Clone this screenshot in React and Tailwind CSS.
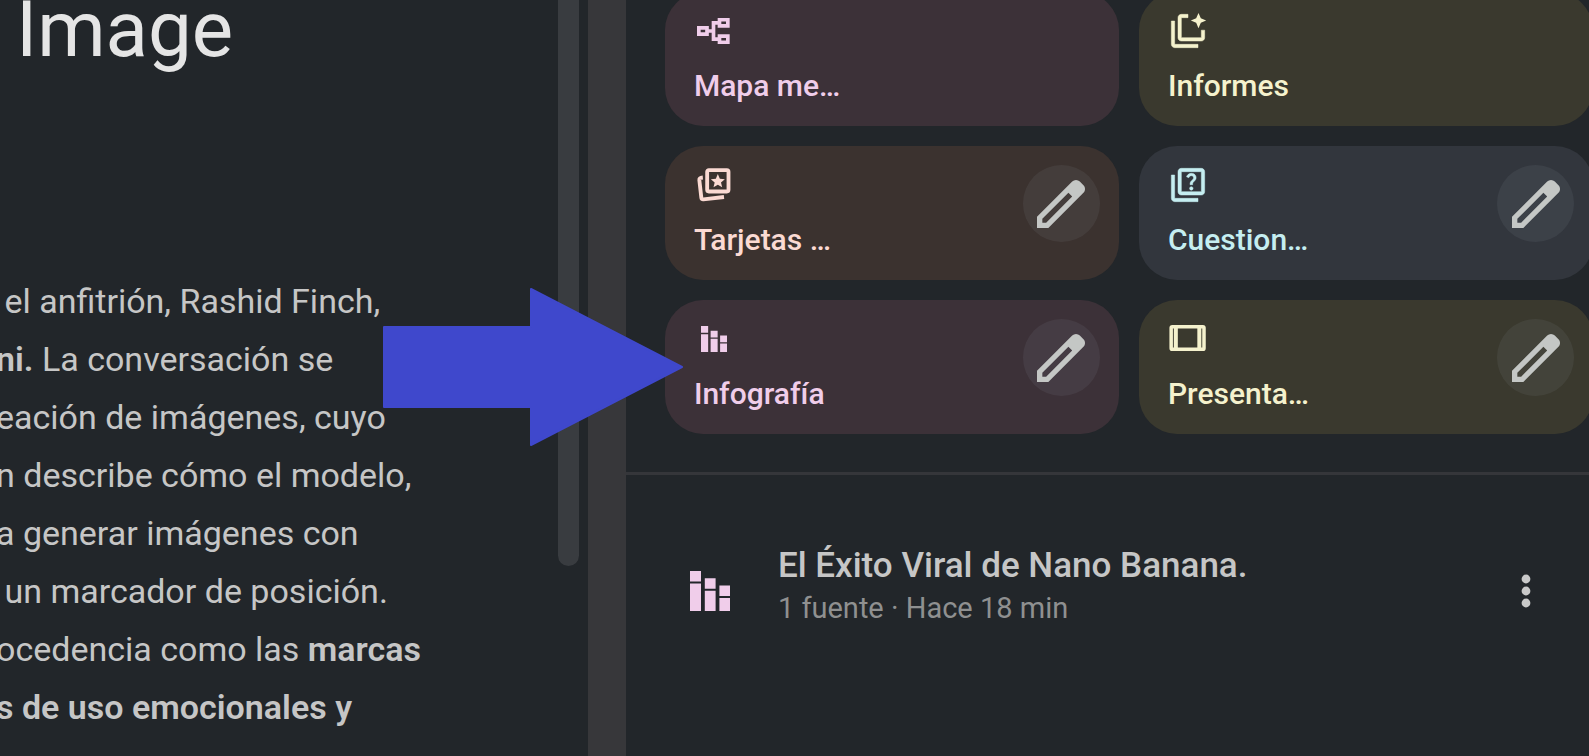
const ICON = 'size-10 shrink-0'

function MindMapIcon() {
  return (
    <svg viewBox="0 0 24 24" className={ICON} fill="none" stroke="currentColor" strokeWidth="2.200" aria-hidden="true">
      <path d="M2.900 10.100h4.900v3.800H2.900zM15.300 5.250h5v3.700h-5zM15.300 15.050h5v3.700h-5zM8 12h4M15.500 7.100H11.700v9.800h3.800" />
    </svg>
  )
}

function ReportIcon() {
  return (
    <svg viewBox="0 0 24 24" className={ICON} fill="currentColor" stroke="currentColor" strokeWidth="0.300" aria-hidden="true">
      <path d="M4 6H2v14c0 1.100.9 2 2 2h14v-2H4V6z" />
      <path d="M12 2H8c-1.100 0-2 .9-2 2v12c0 1.100.9 2 2 2h12c1.100 0 2-.9 2-2v-4.500h-2V16H8V4h4z" />
      <path stroke="none" d="M18.300 1.200l1.400 3.100 3.200 1.400-3.200 1.400-1.400 3.200-1.400-3.200-3.200-1.400 3.200-1.400z" />
    </svg>
  )
}

function FlashcardsIcon() {
  return (
    <svg viewBox="0 0 24 24" className={ICON} fill="none" stroke="currentColor" strokeWidth="2.300" aria-hidden="true">
      <rect x="7.900" y="3.100" width="12.800" height="12.800" rx="1" />
      <path d="M5.300 7.500Q3.100 7.700 3.200 9l1.200 10.600q.1 1.100 1.200 1L18 19.200" />
      <path fill="currentColor" stroke="none" d="M14.300 5.400l1.200 2.800 3 .3-2.300 2 .7 2.900-2.600-1.500-2.600 1.500.7-2.900-2.300-2 3-.3z" />
    </svg>
  )
}

function QuizIcon() {
  return (
    <svg viewBox="0 0 24 24" className={ICON} fill="currentColor" stroke="currentColor" strokeWidth="0.300" aria-hidden="true">
      <path d="M4 6H2v14c0 1.100.9 2 2 2h14v-2H4V6zm16-4H8c-1.100 0-2 .9-2 2v12c0 1.100.9 2 2 2h12c1.100 0 2-.9 2-2V4c0-1.100-.9-2-2-2zm0 14H8V4h12v12z" />
      <path d="M13.510 10.160c.41-.73 1.180-1.160 1.630-1.800.48-.68.21-1.940-1.140-1.940-.88 0-1.320.67-1.500 1.230l-1.370-.57C11.510 5.960 12.520 5 13.990 5c1.230 0 2.080.56 2.510 1.260.37.6.58 1.730.01 2.570-.63.93-1.230 1.210-1.560 1.810-.13.24-.18.4-.18 1.180h-1.520c.01-.41-.06-1.080.26-1.660zM12.950 14.050c0-.59.47-1.040 1.050-1.040.59 0 1.040.45 1.040 1.040 0 .58-.44 1.050-1.040 1.050-.58 0-1.050-.47-1.050-1.050z" />
    </svg>
  )
}

function BarsIcon({ className }) {
  return (
    <svg viewBox="0 0 40 40" className={className} fill="currentColor" aria-hidden="true">
      <path d="M0 0h11v10.500H0zM0 12.500h11V40H0zM14.800 7.200h10.800v10.500H14.800zM14.800 19.700h10.800V40H14.800zM29.400 14.500H40V25H29.400zM29.400 27H40v13H29.400z" />
    </svg>
  )
}

function SlidesIcon() {
  return (
    <svg viewBox="0 0 24 24" className={ICON} fill="none" stroke="currentColor" strokeWidth="2.100" aria-hidden="true">
      <rect x="1.900" y="4.600" width="19.700" height="13.600" rx="0.700" />
      <path d="M4.700 4.600v13.600M18.800 4.600v13.600" strokeWidth="2.400" />
    </svg>
  )
}

function PencilIcon() {
  return (
    <svg viewBox="0 -960 960 960" className="size-16 shrink-0" fill="currentColor" aria-hidden="true">
      <path d="M200-200h57l391-391-57-57-391 391v57Zm-80 80v-170l528-527q12-11 26.500-17t30.500-6q16 0 31 6t26 18l55 56q12 11 17.500 26t5.500 30q0 16-5.500 30.500T817-647L290-120H120Z" />
    </svg>
  )
}

const TOOLS = [
  { label: 'Mapa me…', icon: <MindMapIcon />, style: 'bg-[#3c3138] text-[#f0cdea]' },
  { label: 'Informes', icon: <ReportIcon />, style: 'bg-[#3a392e] text-[#f5f2cd]' },
  { label: 'Tarjetas …', icon: <FlashcardsIcon />, style: 'bg-[#3b322f] text-[#fbdad3]', editable: true },
  { label: 'Cuestion…', icon: <QuizIcon />, style: 'bg-[#32363d] text-[#c5eef1]', editable: true },
  {
    label: 'Infografía',
    icon: (
      <span className="flex size-10 items-center justify-center">
        <BarsIcon className="size-[26px]" />
      </span>
    ),
    style: 'bg-[#3c3138] text-[#f0cdea]',
    editable: true,
  },
  { label: 'Presenta…', icon: <SlidesIcon />, style: 'bg-[#3a392e] text-[#f5f2cd]', editable: true },
]

function ToolCard({ label, icon, style, editable }) {
  return (
    <div className={`flex h-[134px] items-start justify-between rounded-[38px] pr-[19px] pl-[29px] pt-[19px] ${style}`}>
      <button type="button" className="flex flex-col items-start gap-[17px] text-[30px] leading-9 font-medium">
        {icon}
        {label}
      </button>
      {editable && (
        <button
          type="button"
          aria-label={`Editar ${label}`}
          className="flex size-[77px] shrink-0 items-center justify-center rounded-full bg-[#c8d0e0]/7 text-[#c4c7c5]"
        >
          <PencilIcon />
        </button>
      )}
    </div>
  )
}

const LINES = [
  <>&nbsp;el anfitrión, Rashid Finch,</>,
  <><b className="font-semibold">ni.</b> La conversación se</>,
  <>eación de imágenes, cuyo</>,
  <>n describe cómo el modelo,</>,
  <>a generar imágenes con</>,
  <>&nbsp;un marcador de posición.</>,
  <>ocedencia como las <b className="font-semibold">marcas</b></>,
  <b className="font-semibold">s de uso emocionales y</b>,
]

export default function App() {
  return (
    <div className="relative flex h-screen overflow-hidden bg-[#22262a] font-['Roboto','Liberation_Sans',sans-serif] text-[#c6c6c6]">
      <main className="flex w-[37%] shrink-0 justify-between overflow-hidden pr-[9px]">
        <article className="whitespace-nowrap">
          <h1 className="-mt-5 ml-4 text-[78px] leading-[100px] text-[#e5e5e5]">Image</h1>
          <div className="mt-48 -ml-1 text-[34px] leading-[58px]">
            {LINES.map((line, i) => (
              <p key={i}>{line}</p>
            ))}
          </div>
        </article>
        <div className="h-[566px] w-[21px] shrink-0 rounded-b-full bg-[#393c40]" />
      </main>

      <div className="w-[38px] shrink-0 bg-[#37373a]" />

      <aside className="min-w-0 flex-1">
        <section className="-mt-2 -mr-1 grid grid-cols-2 gap-5 pb-[38px] pl-[39px]">
          {TOOLS.map((tool) => (
            <ToolCard key={tool.label} {...tool} />
          ))}
        </section>
        <hr className="border-t-[3px] border-[#35363a]" />
        <section className="flex items-center pt-[68px] pr-[58px] pl-16">
          <BarsIcon className="size-10 shrink-0 text-[#f0cdea]" />
          <div className="ml-12 flex-1 pb-3">
            <h2 className="text-[35px] leading-[46px] font-medium">El Éxito Viral de Nano Banana.</h2>
            <p className="text-[29px] leading-[38px] text-[#8f9090]">1 fuente · Hace 18 min</p>
          </div>
          <button type="button" aria-label="Más opciones" className="text-[#c9c9c9]">
            <svg viewBox="0 0 10 34" className="h-[34px] w-2.5" fill="currentColor" aria-hidden="true">
              <circle cx="5" cy="5" r="4.400" />
              <circle cx="5" cy="17" r="4.400" />
              <circle cx="5" cy="29" r="4.400" />
            </svg>
          </button>
        </section>
      </aside>

      <svg viewBox="0 0 300 158" className="absolute top-[288px] left-[383px] h-[158px] w-[300px]" aria-hidden="true">
        <path
          d="M1 39H148V1L299 79 148 157V119H1z"
          fill="#3f48cc"
          stroke="#3f48cc"
          strokeWidth="2"
          strokeLinejoin="round"
        />
      </svg>
    </div>
  )
}
